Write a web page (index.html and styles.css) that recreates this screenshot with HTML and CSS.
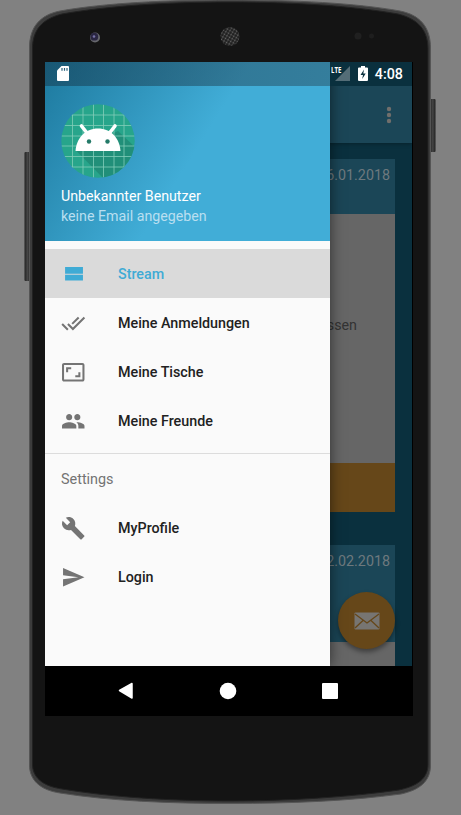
FILE: index.html
```html
<!DOCTYPE html>
<html lang="de">
<head>
<meta charset="utf-8">
<title>Stream</title>
<link rel="stylesheet" href="styles.css">
</head>
<body>
<div class="device">
  <svg class="shell" viewBox="0 0 461 815" aria-hidden="true">
    <defs>
      <pattern id="mesh" width="3" height="3" patternUnits="userSpaceOnUse" patternTransform="rotate(30)"><rect width="3" height="3" fill="#1c1c1c"/><circle cx="1.500" cy="1.500" r=".9" fill="#686868"/></pattern>
      <linearGradient id="key" x1="0" x2="1"><stop stop-color="#222"/><stop offset=".5" stop-color="#454545"/><stop offset="1" stop-color="#202020"/></linearGradient>
    </defs>
    <rect x="24.500" y="152" width="6" height="129" rx="1" fill="url(#key)"/>
    <rect x="430" y="99" width="5.500" height="53" rx="1" fill="url(#key)"/>
    <path class="rim" d="M29.500 700V48C29.500 27 40 15 60 11C105 3 165 0 230 0S355 3 400 11C420 15 430.500 27 430.500 48V765C430.500 782 419 790 401 794C350 801 290 803.500 230 803.500S110 801 60 793C40 790 29.500 780 29.500 765Z"/>
    <path class="face" d="M32.500 700V49C32.500 30 42 19 62 14C107 6 165 2 230 2S353 6 398 14C418 19 428 30 428 49V764C428 779 417 786 399 790C350 797 290 801 230 801S110 797 62 789C42 786 32.500 777 32.500 764Z"/>
    <circle cx="95" cy="37.500" r="5" fill="#66676c"/><circle cx="94.300" cy="36.700" r="3.900" fill="#2a2642"/><circle cx="94" cy="36.500" r="1.300" fill="#7772a7"/>
    <circle cx="230" cy="36.500" r="9.500" fill="url(#mesh)"/>
    <circle cx="358" cy="36" r="3.500" fill="#202020"/><circle cx="371.500" cy="36" r="2.500" fill="#1e1e1e"/>
  </svg>
  <div class="screen">
    <div class="viewport">
      <main class="content">
        <div class="appbar"><svg width="6" height="20" viewBox="0 0 6 20"><g fill="#716f6c"><circle cx="3" cy="4" r="2.200"/><circle cx="3" cy="10" r="2.200"/><circle cx="3" cy="16" r="2.200"/></g></svg></div>
        <section class="card">
          <div class="card-head">26.01.2018</div>
          <div class="card-body">Essen</div>
          <div class="card-foot"></div>
        </section>
        <section class="card second">
          <div class="card-head tall">22.02.2018</div>
          <div class="card-body rest"></div>
        </section>
        <div class="fab"><svg width="26" height="18" viewBox="0 0 26 18"><rect x=".5" y=".5" width="25" height="17" rx="1" fill="#777572"/><path d="M1 2l12 9L25 2M1 16l8-7.500M25 16l-8-7.500" fill="none" stroke="#664719" stroke-width="1.300"/></svg></div>
      </main>
      <aside class="drawer">
        <header class="profile">
          <svg class="avatar" viewBox="0 0 74 74">
            <defs><clipPath id="disc"><circle cx="37" cy="37" r="36.700"/></clipPath></defs>
            <g clip-path="url(#disc)">
              <rect width="74" height="74" fill="#27a58b"/>
              <path d="M15.500 47L43 75H75V44L57 27Z" fill="#218f79"/>
              <path d="M11.500 0V74M22 0V74M32.500 0V74M42.500 0V74M53 0V74M63 0V74M0 11H74M0 21.500H74M0 32H74M0 42H74M0 52.500H74M0 63H74" stroke="#83cdb9" stroke-width=".8"/>
            </g>
            <path d="M14.500 47C15.500 34 24 24.500 37 24.500S58.500 34 59.500 47Z" fill="#fff"/>
            <path d="M20.500 22L26 29M54 22L48.500 29" stroke="#fff" stroke-width="3.600" stroke-linecap="round"/>
            <circle cx="28" cy="37.500" r="2.200" fill="#247a68"/><circle cx="46.500" cy="37.500" r="2.200" fill="#247a68"/>
          </svg>
          <div class="name">Unbekannter Benutzer</div>
          <div class="mail">keine Email angegeben</div>
        </header>
        <nav class="menu">
          <a class="item active"><svg viewBox="0 0 24 24"><path d="M4 12.500h17.500V18H4zM4 5v6.500h17.500V5z"/></svg>Stream</a>
          <a class="item"><svg viewBox="0 0 24 24"><path d="M18 7l-1.410-1.410-6.340 6.340 1.410 1.410L18 7zm4.240-1.410L11.660 16.170 7.480 12l-1.410 1.410L11.660 19l12-12-1.420-1.410zM.41 13.410L6 19l1.410-1.410L1.830 12 .41 13.410z"/></svg>Meine Anmeldungen</a>
          <a class="item"><svg viewBox="0 0 24 24"><path d="M19 12h-2v3h-3v2h5v-5zM7 9h3V7H5v5h2V9zm14-6H3c-1.100 0-2 .9-2 2v14c0 1.100.9 2 2 2h18c1.100 0 2-.9 2-2V5c0-1.100-.9-2-2-2zm0 16.010H3V4.990h18v14.020z"/></svg>Meine Tische</a>
          <a class="item"><svg viewBox="0 0 24 24"><path d="M16 11c1.660 0 2.990-1.340 2.990-3S17.660 5 16 5s-3 1.340-3 3 1.340 3 3 3zm-8 0c1.660 0 2.990-1.340 2.990-3S9.660 5 8 5 5 6.340 5 8s1.340 3 3 3zm0 2c-2.330 0-7 1.170-7 3.500V19h14v-2.500c0-2.330-4.670-3.500-7-3.500zm8 0c-.29 0-.62.020-.97.050 1.160.84 1.970 1.970 1.970 3.450V19h6v-2.500c0-2.330-4.670-3.500-7-3.500z"/></svg>Meine Freunde</a>
          <div class="group">Settings</div>
          <a class="item"><svg viewBox="0 0 24 24"><path d="M22.700 19l-9.100-9.100c.9-2.300.4-5-1.500-6.900-2-2-5-2.400-7.400-1.300L9 6 6 9 1.600 4.700C.4 7.100.9 10.100 2.900 12.100c1.900 1.900 4.600 2.400 6.900 1.500l9.100 9.100c.4.400 1 .4 1.400 0l2.300-2.300c.5-.4.500-1.100.1-1.400z"/></svg>MyProfile</a>
          <a class="item"><svg viewBox="0 0 24 24"><path d="M2.010 21L23 12 2.010 3 2 10l15 2-15 2z"/></svg>Login</a>
        </nav>
      </aside>
      <div class="status">
        <svg class="sd" width="12" height="15" viewBox="0 0 12 15"><path d="M4.500 0H11a1 1 0 0 1 1 1v13a1 1 0 0 1-1 1H1a1 1 0 0 1-1-1V4.500Z" fill="#fff"/><path d="M5 2v2.800M7.500 2v2.800M10 2v2.800" stroke="#28617b" stroke-width="1.200"/></svg>
        <span class="lte">LTE</span>
        <svg class="signal" width="15" height="15" viewBox="0 0 15 15"><path d="M15 0V15H0Z" fill="#546d77"/></svg>
        <svg class="battery" width="10" height="15" viewBox="0 0 10 15"><path d="M3 0h4v1.500h2a1 1 0 0 1 1 1V14a1 1 0 0 1-1 1H1a1 1 0 0 1-1-1V2.500a1 1 0 0 1 1-1h2Z" fill="#fff"/><path d="M6 3.500L2.500 9H5l-.8 4L7.700 7.500H5.300Z" fill="#0a303e"/></svg>
        <span class="clock">4:08</span>
      </div>
    </div>
    <div class="navbar">
      <svg width="16" height="18" viewBox="0 0 16 18"><path d="M1.500 8.500L14 1.500V16Z" fill="#fff" stroke="#fff" stroke-width="1.500" stroke-linejoin="round"/></svg>
      <svg width="18" height="18" viewBox="0 0 18 18"><circle cx="9" cy="9" r="8.300" fill="#fff"/></svg>
      <svg width="16" height="16" viewBox="0 0 16 16"><rect width="16" height="16" rx="1" fill="#fff"/></svg>
    </div>
  </div>
</div>
</body>
</html>
```
FILE: styles.css
```css
* { box-sizing: border-box; }
body { margin: 0; background: #818181; font-family: Roboto, "Liberation Sans", sans-serif; }
svg { display: block; flex: none; }
.device { position: relative; width: 461px; height: 815px; padding: 62px 48px 0 45px; overflow: hidden; }
.shell { position: absolute; inset: 0; width: 461px; height: 815px; }
.rim { fill: #3c3c3c; stroke: #555; stroke-width: 1; }
.face { fill: #141414; stroke: #222; stroke-width: 1; }
.screen { position: relative; width: 368px; background: #000; }
.viewport { display: grid; grid-template-columns: 285px 82px; grid-template-rows: 24px 580px; width: 367px; height: 604px; overflow: hidden; }
.content { grid-area: 1 / 1 / 3 / 3; position: relative; background: #0a303e; padding: 24px 17px 0; }
.appbar { display: flex; justify-content: flex-end; align-items: center; height: 57px; margin: 0 -17px 16px; padding-right: 20px; background: #1b4657; box-shadow: 0 1px 4px rgba(0, 0, 0, .3); }
.card { margin-bottom: 33px; color: #6e797e; font-size: 14.300px; }
.card-head { height: 55px; padding: 8px 5px; background: #1b4657; text-align: right; line-height: 17px; }
.card-head.tall { height: 97px; }
.card-body { height: 249px; padding: 101px 38px 0; background: #666; color: #333; text-align: right; line-height: 20px; }
.card-body.rest { height: 24px; padding: 0; }
.card-foot { height: 49px; background: #664719; }
.fab { position: absolute; right: 17px; bottom: 17px; width: 57px; height: 57px; border-radius: 50%; display: grid; place-items: center; background: #664719; box-shadow: 0 3px 5px rgba(0, 0, 0, .4); }
.drawer { grid-area: 1 / 1 / 3 / 2; position: relative; background: #fafafa; box-shadow: 0 0 13px rgba(0, 0, 0, .55); }
.profile { height: 179px; padding: 42px 16px 0; background: linear-gradient(122.100deg, #1d799e, #41add7 52%, #41add7); color: #fff; font-size: 14.230px; }
.avatar { width: 74px; height: 74px; margin-bottom: 9px; }
.name, .mail { line-height: 19.500px; }
.mail { color: #b9dff0; }
.menu { padding-top: 8px; }
.item { display: flex; align-items: center; height: 49px; padding: 1px 0 0 16px; gap: 32.500px; color: #212121; font-size: 14.300px; font-weight: 500; }
.item svg { width: 24.500px; height: 24.500px; fill: #747474; }
.active { background: #dadada; color: #3fabd5; }
.active svg { fill: #3fabd5; }
.group { height: 50px; margin-top: 8px; padding: 17px 16px 0; border-top: 1px solid #dcdcdc; color: #737373; font-size: 14.400px; line-height: 18px; }
.status { grid-area: 1 / 1 / 2 / 3; position: relative; display: flex; align-items: center; padding: 0 9px 1px 12px; background: linear-gradient(90deg, rgba(20, 55, 75, .5), rgba(35, 60, 75, .42) 285px, rgba(10, 48, 62, 1) 285px); }
.lte { margin: -7px 0 0 262px; width: 12px; color: #fff; font: 700 9.500px/10px "Open Sans", sans-serif; transform: scaleX(.64); transform-origin: left; }
.signal { margin-left: -8px; }
.battery { margin-left: 8px; }
.clock { margin-left: auto; color: #fff; font-size: 14.300px; font-weight: 500; line-height: 24px; padding-top: 1px; }
.navbar { display: flex; align-items: center; justify-content: space-between; height: 50px; padding: 0 75px 1px 73px; border-radius: 0 0 2px 2px; }
```
